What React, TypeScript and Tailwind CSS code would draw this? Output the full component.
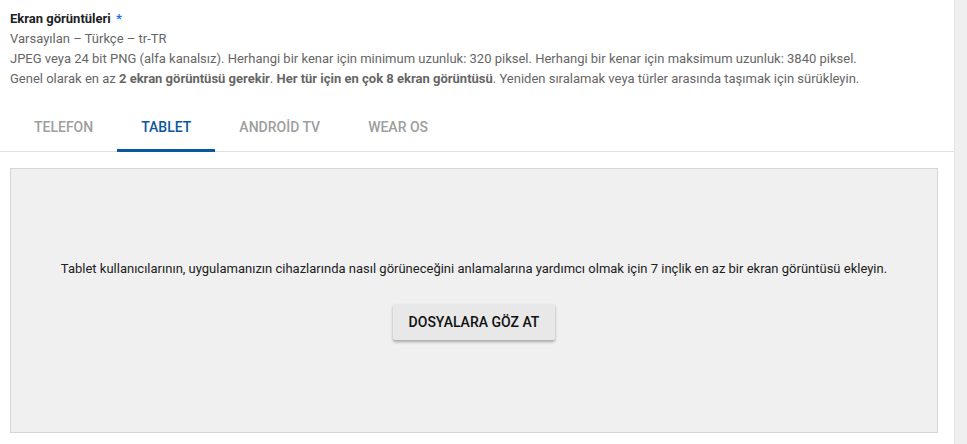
import React from "react";

export default function App() {
  const tabs = ["TELEFON", "TABLET", "ANDROİD TV", "WEAR OS"];
  return (
    <div className="flex h-[444px] w-[967px] bg-[#efefef]" style={{ fontFamily: "Roboto, 'Noto Sans', sans-serif" }}>
      <div className="flex h-full w-[954px] flex-col bg-white">
        <div className="pl-[10px] pt-[9px] text-[13px] leading-[20px]">
          <div className="font-bold text-[#202124]">
            Ekran görüntüleri <span className="ml-[2px] text-[#1a73e8]">*</span>
          </div>
          <div className="text-[#666666]">Varsayılan – Türkçe – tr-TR</div>
          <div className="text-[#666666]">
            JPEG veya 24 bit PNG (alfa kanalsız). Herhangi bir kenar için minimum uzunluk: 320 piksel. Herhangi bir kenar için maksimum uzunluk: 3840 piksel.
          </div>
          <div className="text-[#666666]">
            Genel olarak en az <b className="font-bold">2 ekran görüntüsü gerekir</b>. <b className="font-bold">Her tür için en çok 8 ekran görüntüsü</b>. Yeniden sıralamak veya türler arasında taşımak için sürükleyin.
          </div>
        </div>
        <div className="mt-[15px] flex h-[48px] border-b border-[#e0e0e0] pl-[10px]">
          {tabs.map((t) => {
            const active = t === "TABLET";
            return (
              <div
                key={t}
                className={
                  active
                    ? "relative flex items-center px-6 text-[14px] font-medium text-[#0b57a0]"
                    : "relative flex items-center px-6 text-[14px] font-medium text-[#9e9e9e]"
                }
              >
                {t}
                {active && <div className="absolute bottom-[-1px] left-0 right-0 h-[3px] bg-[#0b57a0]" />}
              </div>
            );
          })}
        </div>
        <div className="pl-[10px] pr-[16px] pt-[16px]">
          <div className="flex h-[265px] flex-col items-center justify-center border border-[#d6d6d6] bg-[#f0f0f0]">
            <div className="text-[13px] leading-[16px] text-[#212121]">
              Tablet kullanıcılarının, uygulamanızın cihazlarında nasıl görüneceğini anlamalarına yardımcı olmak için 7 inçlik en az bir ekran görüntüsü ekleyin.
            </div>
            <button className="mt-[27px] h-[36px] w-[162px] rounded-[2px] bg-[#e8e8e8] text-[14px] font-medium text-[#111111] shadow-[0_2px_3px_rgba(0,0,0,0.3)]">
              DOSYALARA GÖZ AT
            </button>
          </div>
        </div>
      </div>
      <div className="h-full w-[1px] bg-[#e6e6e6]" />
    </div>
  );
}
